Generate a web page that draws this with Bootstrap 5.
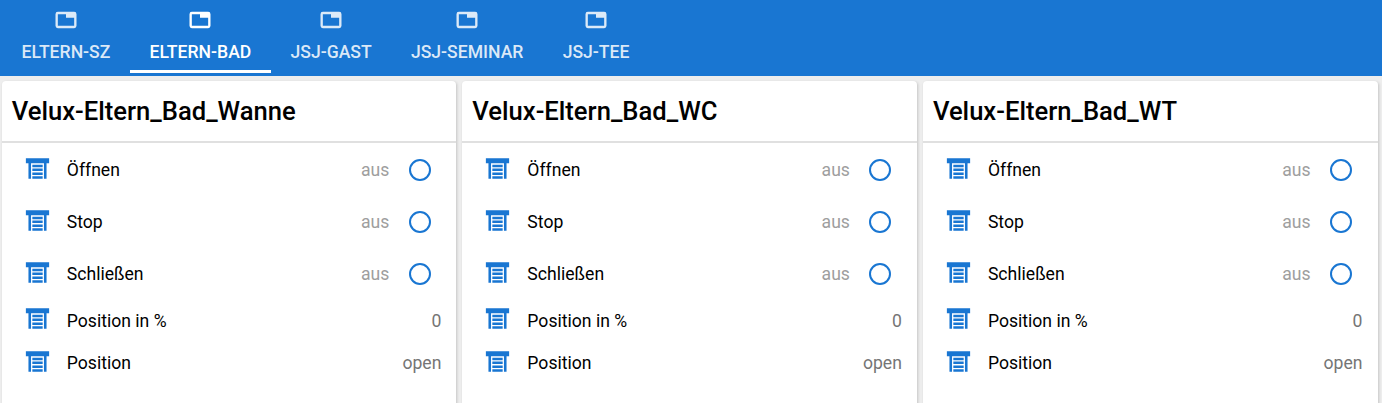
<!DOCTYPE html>
<html lang="de">
<head>
    <meta charset="UTF-8">
    <meta name="viewport" content="width=device-width, initial-scale=1.0">
    <title>Velux</title>
    <link href="https://cdn.jsdelivr.net/npm/bootstrap@5.3.0/dist/css/bootstrap.min.css" rel="stylesheet">
    <style>
        html, body { height: 100%; overflow: hidden; }
        body { font-family: Roboto, "Liberation Sans", sans-serif; background: #eee; color: #000; font-size: 17.6px; }
        .top-tabs { background: #1976d2; height: 76px; padding: 0 2px; }
        .room-tab { padding: 0 19.6px; height: 73px; color: rgba(255,255,255,.85); font-weight: 500; font-size: 17.6px; line-height: 1; border-bottom: 3px solid transparent; text-decoration: none; }
        .room-tab svg { width: 28px; height: 28px; margin-top: 6px; margin-bottom: 10px; display: block; }
        .room-tab.active { color: #fff; border-bottom-color: #fff; }
        .cards-grid { display: grid; grid-template-columns: repeat(3, 1fr); gap: 6px; padding: 5px 4.5px 0 1.8px; }
        .blind-card { background: #fff; height: 340px; border-radius: 4px; box-shadow: 1px 1px 3px rgba(0,0,0,.18); }
        .blind-title { height: 62px; padding: 0 10px; font-size: 25.6px; font-weight: 500; line-height: 61px; border-bottom: 2px solid #e0e0e0; }
        .blind-rows { padding-top: 1px; }
        .blind-row { padding-left: 20px; padding-right: 15px; }
        .blind-row svg.shutter { width: 31px; height: 31px; flex: none; margin-top: -4px; }
        .blind-row .row-name { margin-left: 14px; flex: 1 1 auto; }
        .row-switch { height: 52px; }
        .row-value { height: 42.6px; color: #757575; }
        .row-switch + .row-value { margin-top: -0.5px; }
        .row-value .row-name { color: #000; }
        .state-off { color: #9e9e9e; }
        .ring { width: 22px; height: 22px; border: 2.2px solid #1976d2; border-radius: 50%; margin-left: 19.3px; margin-right: 10.7px; margin-top: -1px; }
    </style>
</head>
<body>
<svg width="0" height="0" class="position-absolute">
    <symbol id="win" viewBox="0 0 24 24"><path fill="currentColor" fill-rule="evenodd" d="M5 5H19A2 2 0 0 1 21 7V17A2 2 0 0 1 19 19H5A2 2 0 0 1 3 17V7A2 2 0 0 1 5 5ZM5 7V17H19V10H12V7Z"/></symbol>
    <symbol id="shut" viewBox="0 0 24 24"><path fill="#1976d2" d="M3 4H21V8H19V20H17V8H7V20H5V8H3V4M8 9H16V11H8V9M8 12H16V14H8V12M8 15H16V17H8V15M8 18H16V20H8V18Z"/></symbol>
</svg>

<nav class="top-tabs d-flex" id="tabs"></nav>
<div class="cards-grid" id="cards"></div>

<script>
    let tabs = ['Eltern-SZ', 'Eltern-Bad', 'JSJ-Gast', 'JSJ-Seminar', 'JSJ-Tee'];
    let tabBox = document.getElementById('tabs');
    tabs.forEach((t, i) => {
        tabBox.innerHTML += `<a href="#" class="room-tab d-flex flex-column align-items-center ${i == 1 ? 'active' : ''}">
            <svg><use href="#win"></use></svg><span>${t.toUpperCase()}</span></a>`;
    });

    let names = ['Velux-Eltern_Bad_Wanne', 'Velux-Eltern_Bad_WC', 'Velux-Eltern_Bad_WT'];
    let cardBox = document.getElementById('cards');
    names.forEach(n => {
        let rows = '';
        ['Öffnen', 'Stop', 'Schließen'].forEach(r => {
            rows += `<div class="blind-row row-switch d-flex align-items-center">
                <svg class="shutter"><use href="#shut"></use></svg>
                <span class="row-name">${r}</span><span class="state-off">aus</span><span class="ring"></span></div>`;
        });
        [['Position in %', '0'], ['Position', 'open']].forEach(r => {
            rows += `<div class="blind-row row-value d-flex align-items-center">
                <svg class="shutter"><use href="#shut"></use></svg>
                <span class="row-name">${r[0]}</span><span>${r[1]}</span></div>`;
        });
        cardBox.innerHTML += `<div class="blind-card"><div class="blind-title">${n}</div><div class="blind-rows">${rows}</div></div>`;
    });
</script>
<script src="https://cdn.jsdelivr.net/npm/bootstrap@5.3.0/dist/js/bootstrap.bundle.min.js"></script>
</body>
</html>
